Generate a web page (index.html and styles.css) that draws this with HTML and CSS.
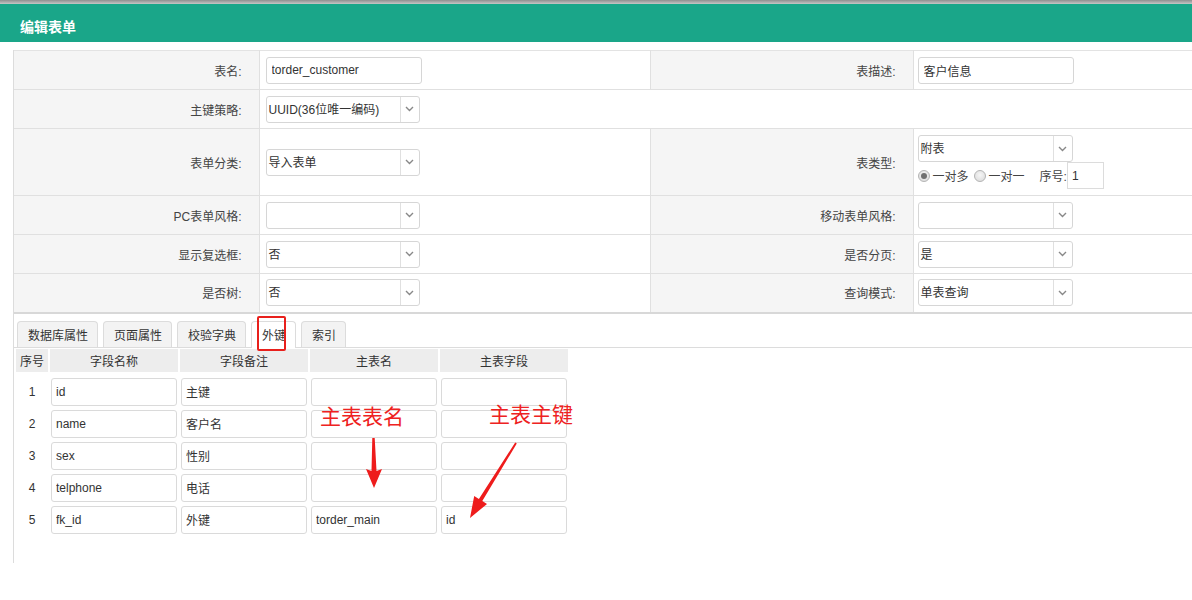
FILE: index.html
```html
<!DOCTYPE html>
<html lang="zh-CN">
<head>
<meta charset="utf-8">
<title>编辑表单</title>
<link rel="stylesheet" href="styles.css">
</head>
<body>
<div class="topline"></div>
<div class="header">编辑表单</div>
<div class="main">
  <table class="form">
    <colgroup><col class="c1"><col class="c2"><col class="c3"><col class="c4"></colgroup>
    <tr class="r">
      <td class="lbl">表名:</td>
      <td class="val"><input class="txt" value="torder_customer"></td>
      <td class="lbl">表描述:</td>
      <td class="val val2"><input class="txt" value="客户信息"></td>
    </tr>
    <tr class="r">
      <td class="lbl">主键策略:</td>
      <td class="val" colspan="3"><div class="sel"><span class="st">UUID(36位唯一编码)</span><span class="arr"><svg width="9" height="6" viewBox="0 0 9 6"><path d="M1 1l3.5 3.5L8 1" fill="none" stroke="#888" stroke-width="1.4"/></svg></span></div></td>
    </tr>
    <tr class="r tall">
      <td class="lbl">表单分类:</td>
      <td class="val"><div class="sel"><span class="st">导入表单</span><span class="arr"><svg width="9" height="6" viewBox="0 0 9 6"><path d="M1 1l3.5 3.5L8 1" fill="none" stroke="#888" stroke-width="1.4"/></svg></span></div></td>
      <td class="lbl">表类型:</td>
      <td class="val val2">
        <div class="sel wide"><span class="st">附表</span><span class="arr"><svg width="9" height="6" viewBox="0 0 9 6"><path d="M1 1l3.5 3.5L8 1" fill="none" stroke="#888" stroke-width="1.4"/></svg></span></div>
        <div class="radios">
          <span class="radio on"></span><span class="rt">一对多</span>
          <span class="radio"></span><span class="rt">一对一</span>
          <span class="seqlbl">序号:</span><input class="seq" value="1">
        </div>
      </td>
    </tr>
    <tr class="r">
      <td class="lbl">PC表单风格:</td>
      <td class="val"><div class="sel"><span class="st"></span><span class="arr"><svg width="9" height="6" viewBox="0 0 9 6"><path d="M1 1l3.5 3.5L8 1" fill="none" stroke="#888" stroke-width="1.4"/></svg></span></div></td>
      <td class="lbl">移动表单风格:</td>
      <td class="val val2"><div class="sel wide"><span class="st"></span><span class="arr"><svg width="9" height="6" viewBox="0 0 9 6"><path d="M1 1l3.5 3.5L8 1" fill="none" stroke="#888" stroke-width="1.4"/></svg></span></div></td>
    </tr>
    <tr class="r">
      <td class="lbl">显示复选框:</td>
      <td class="val"><div class="sel"><span class="st">否</span><span class="arr"><svg width="9" height="6" viewBox="0 0 9 6"><path d="M1 1l3.5 3.5L8 1" fill="none" stroke="#888" stroke-width="1.4"/></svg></span></div></td>
      <td class="lbl">是否分页:</td>
      <td class="val val2"><div class="sel wide"><span class="st">是</span><span class="arr"><svg width="9" height="6" viewBox="0 0 9 6"><path d="M1 1l3.5 3.5L8 1" fill="none" stroke="#888" stroke-width="1.4"/></svg></span></div></td>
    </tr>
    <tr class="r last">
      <td class="lbl">是否树:</td>
      <td class="val"><div class="sel"><span class="st">否</span><span class="arr"><svg width="9" height="6" viewBox="0 0 9 6"><path d="M1 1l3.5 3.5L8 1" fill="none" stroke="#888" stroke-width="1.4"/></svg></span></div></td>
      <td class="lbl">查询模式:</td>
      <td class="val val2"><div class="sel wide"><span class="st">单表查询</span><span class="arr"><svg width="9" height="6" viewBox="0 0 9 6"><path d="M1 1l3.5 3.5L8 1" fill="none" stroke="#888" stroke-width="1.4"/></svg></span></div></td>
    </tr>
  </table>

  <div class="tabs">
    <span class="tab">数据库属性</span>
    <span class="tab">页面属性</span>
    <span class="tab">校验字典</span>
    <span class="tab active">外键</span>
    <span class="tab">索引</span>
  </div>

  <table class="grid">
    <colgroup><col class="g0"><col class="g1"><col class="g1"><col class="g1"><col class="g1"></colgroup>
    <thead>
      <tr><th>序号</th><th>字段名称</th><th>字段备注</th><th>主表名</th><th>主表字段</th></tr>
    </thead>
    <tbody>
      <tr><td class="no">1</td><td><input class="cell" value="id"></td><td><input class="cell" value="主键"></td><td><input class="cell" value=""></td><td><input class="cell" value=""></td></tr>
      <tr><td class="no">2</td><td><input class="cell" value="name"></td><td><input class="cell" value="客户名"></td><td><input class="cell" value=""></td><td><input class="cell" value=""></td></tr>
      <tr><td class="no">3</td><td><input class="cell" value="sex"></td><td><input class="cell" value="性别"></td><td><input class="cell" value=""></td><td><input class="cell" value=""></td></tr>
      <tr><td class="no">4</td><td><input class="cell" value="telphone"></td><td><input class="cell" value="电话"></td><td><input class="cell" value=""></td><td><input class="cell" value=""></td></tr>
      <tr><td class="no">5</td><td><input class="cell" value="fk_id"></td><td><input class="cell" value="外键"></td><td><input class="cell" value="torder_main"></td><td><input class="cell" value="id"></td></tr>
    </tbody>
  </table>
</div>

<div class="overlay">
  <div class="redbox"></div>
  <div class="note n1">主表表名</div>
  <div class="note n2">主表主键</div>
  <svg class="arrows" width="1192" height="600" viewBox="0 0 1192 600">
    <polygon points="372.3,438 374.7,438 376.5,471 382,469 374,488 366,469 371.5,471" fill="#ee1c1c"/>
    <polygon points="516.8,443.5 482.3,501.1 487,504 470,518 474.2,496 478.9,498.9 515.2,442.5" fill="#ee1c1c"/>
  </svg>
</div>
</body>
</html>
```

FILE: styles.css
```css
* { box-sizing: border-box; }
html, body {
  margin: 0;
  padding: 0;
  background: #fff;
  width: 1192px;
  height: 600px;
  overflow: hidden;
}
body {
  position: relative;
  font-family: "Liberation Sans", "Noto Sans CJK SC", sans-serif;
  font-size: 12px;
  color: #333;
}
.topline {
  height: 4px;
  background: linear-gradient(#8f8f8f, #c6c6c6);
}
.header {
  height: 38px;
  background: #1aa689;
  color: #fff;
  font-weight: bold;
  font-size: 14px;
  padding: 7px 0 0 20px;
  line-height: 31px;
  font-family: "Noto Sans CJK SC", sans-serif;
}
.main {
  margin: 8px 0 0 13px;
  border-left: 1px solid #dcdcdc;
  height: 513px;
}
.form {
  width: 1179px;
  table-layout: fixed;
  border-collapse: collapse;
}
.c1 { width: 245px; }
.c2 { width: 391px; }
.c3 { width: 263px; }
.c4 { width: 280px; }
.form td {
  border: 1px solid #e0e0e0;
  padding: 0;
  vertical-align: middle;
}
.form td:first-child { border-left: none; }
.form tr:first-child td { border-top: 1px solid #e3e3e3; }
.form tr.r td { height: 39px; }
.form tr.tall td { height: 67px; }
.form tr.last td { border-bottom: 2px solid #d8d8d8; }
.lbl {
  background: #f5f5f5;
  text-align: right;
  padding-right: 17px !important;
  color: #444;
}
.val { padding-left: 6px !important; background: #fff; }
.form td.val2 { padding-left: 4px !important; }
.txt {
  width: 156px;
  height: 27px;
  border: 1px solid #d6d6d6;
  border-radius: 3px;
  padding: 0 5px;
  font: inherit;
  color: #333;
  display: block;
  outline: none;
}
.sel {
  width: 154px;
  height: 27px;
  border: 1px solid #d6d6d6;
  border-radius: 3px;
  display: flex;
  background: #fff;
}
.sel.wide { width: 155px; }
.st {
  flex: 1;
  padding: 1px 0 0 2px;
  line-height: 25px;
  white-space: nowrap;
  overflow: hidden;
}
.arr {
  width: 19px;
  border-left: 1px solid #e0e0e0;
  display: flex;
  align-items: center;
  justify-content: center;
}
.radios {
  display: flex;
  align-items: center;
  height: 27px;
  color: #444;
}
.radio {
  width: 12px;
  height: 12px;
  border-radius: 50%;
  border: 1px solid #b5b5b5;
  background: radial-gradient(circle at 50% 40%, #f6f6f6, #d8d8d8);
  margin-right: 3px;
  display: inline-block;
  position: relative;
}
.radio.on::after {
  content: "";
  position: absolute;
  left: 2px; top: 2px;
  width: 6px; height: 6px;
  border-radius: 50%;
  background: #707070;
}
.rt { margin-right: 5px; }
.seqlbl { margin-left: 10px; }
.seq {
  width: 37px;
  height: 27px;
  border: 1px solid #dcdcdc;
  padding: 0 4px;
  font: inherit;
  color: #333;
  outline: none;
}
.tabs {
  margin-top: 7px;
  display: flex;
  gap: 5px;
  padding-left: 3px;
  border-bottom: 1px solid #dcdcdc;
  height: 27px;
  align-items: flex-end;
}
.tab {
  height: 26px;
  line-height: 25px;
  padding: 2px 9px 0 10px;
  border: 1px solid #dcdcdc;
  border-bottom: none;
  border-radius: 4px 4px 0 0;
  background: #f3f3f3;
  color: #333;
  white-space: nowrap;
}
.tab.active {
  background: #fff;
  height: 27px;
  margin-bottom: -1px;
}
.grid {
  border-collapse: separate;
  border-spacing: 2px;
  table-layout: fixed;
  width: 556px;
  margin-top: -1px;
}
.g0 { width: 32px; }
.g1 { width: 128px; }
.grid th {
  background: #ededed;
  font-weight: normal;
  height: 23px;
  padding: 0;
  color: #333;
  text-align: center;
}
.grid td {
  padding: 1px 1px;
  height: 30px;
}
.grid tbody tr:first-child td { padding-top: 4px; height: 33px; }
.grid td.no { text-align: center; color: #333; }
.cell {
  width: 126px;
  height: 28px;
  border: 1px solid #dadada;
  border-radius: 3px;
  padding: 0 4px;
  font: inherit;
  color: #333;
  display: block;
  outline: none;
}
.overlay {
  position: absolute;
  left: 0; top: 0;
  width: 1192px; height: 600px;
  pointer-events: none;
}
.redbox {
  position: absolute;
  left: 257px; top: 316px;
  width: 29px; height: 35px;
  border: 2px solid #e8201c;
  border-radius: 2px;
}
.note {
  position: absolute;
  color: #ee2222;
  font-family: "Noto Sans CJK SC", sans-serif;
  font-size: 21px;
  line-height: 1;
  white-space: nowrap;
}
.n1 { left: 320px; top: 405px; }
.n2 { left: 489px; top: 403px; }
.arrows { position: absolute; left: 0; top: 0; }
```
